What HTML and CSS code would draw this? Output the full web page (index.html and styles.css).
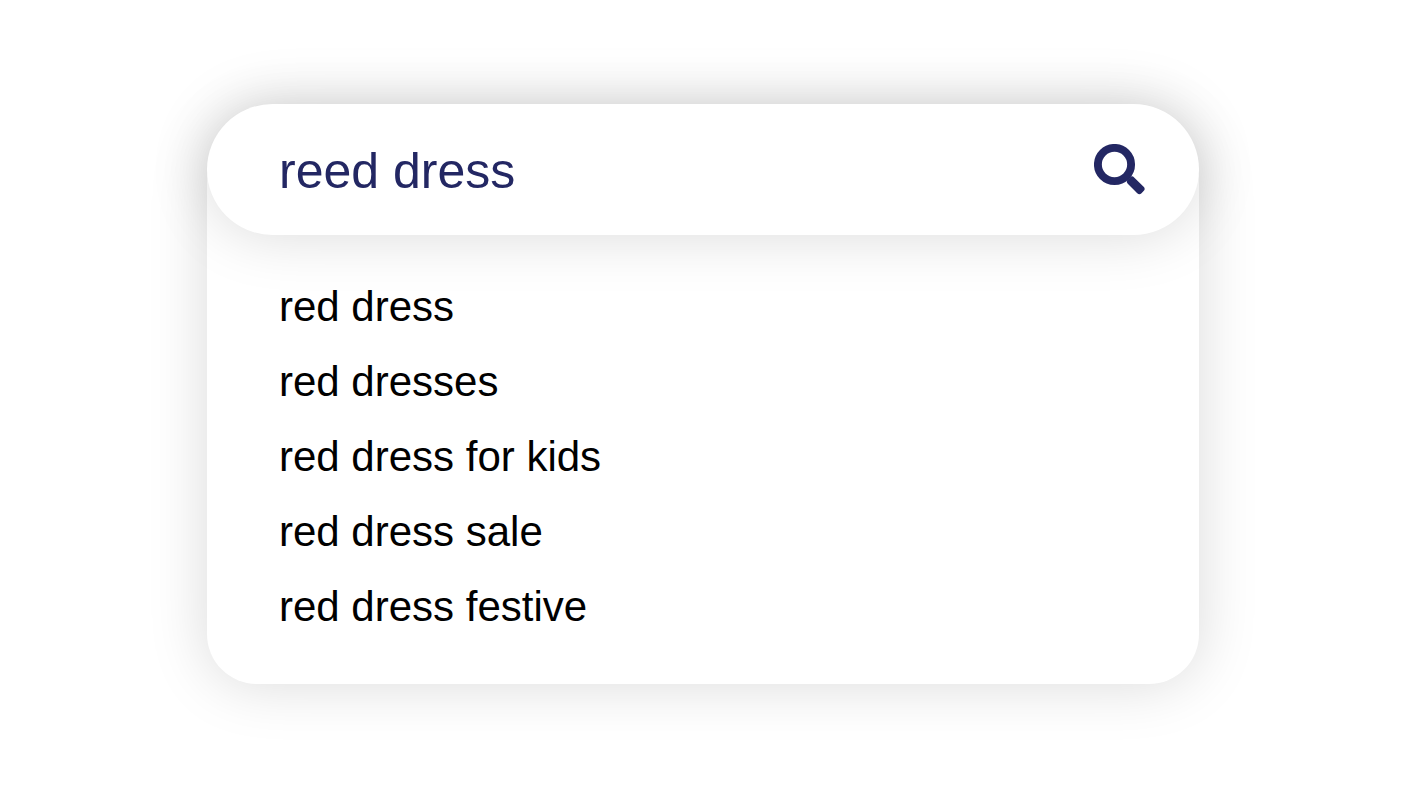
FILE: index.html
```html
<!DOCTYPE html>
<html lang="en">
<head>
  <meta charset="UTF-8">
  <meta name="viewport" content="width=device-width, initial-scale=1.0">
  <title>Search</title>
  <link rel="stylesheet" href="styles.css">
</head>
<body>
  <div class="search-box">
    <form class="search-bar" role="search">
      <input class="search-input" type="text" name="q" value="reed dress" aria-label="Search" autocomplete="off" spellcheck="false">
      <button class="search-btn" type="submit" aria-label="Search">
        <svg class="search-icon" viewBox="0 0 51 51" aria-hidden="true">
          <circle cx="20.5" cy="20.5" r="16.6" fill="none" stroke="currentColor" stroke-width="7.9"/>
          <rect x="32" y="36.8" width="19.4" height="9" rx="3" fill="currentColor" transform="rotate(45 41.7 41.3)"/>
        </svg>
      </button>
    </form>
    <ul class="suggestions">
      <li><a href="#">red dress</a></li>
      <li><a href="#">red dresses</a></li>
      <li><a href="#">red dress for kids</a></li>
      <li><a href="#">red dress sale</a></li>
      <li><a href="#">red dress festive</a></li>
    </ul>
  </div>
</body>
</html>
```
FILE: styles.css
```css
* {
  box-sizing: border-box;
}

body {
  display: flow-root;
  margin: 0;
  padding: 118px 208px 102px 207px;
  background-color: #fff;
  font-family: "Liberation Sans", Arial, sans-serif;
}

/* the bar sticks out a little above the panel */
.search-box {
  display: flow-root;
  border-radius: 65px 65px 50px 50px;
  background-color: #fff;
  box-shadow: 0 0 60px rgba(0, 0, 0, 0.15);
}

.search-bar {
  display: flex;
  align-items: center;
  height: 131px;
  margin-top: -14px;
  padding: 0 54px 0 72px;
  border-radius: 66px;
  background-color: #fff;
  box-shadow: 0 0 60px rgba(0, 0, 0, 0.15);
}

.search-input {
  flex: 1;
  min-width: 0;
  padding: 2px 0 0;
  border: none;
  outline: none;
  background: none;
  color: #232763;
  font-family: inherit;
  font-size: 50px;
}

.search-btn {
  display: flex;
  padding: 0;
  border: none;
  background: none;
  color: #232763;
  cursor: pointer;
}

.search-icon {
  width: 51px;
  height: 51px;
}

.suggestions {
  margin: 0;
  padding: 34px 72px 40px;
  list-style: none;
}

.suggestions a {
  display: block;
  color: #000;
  font-size: 42px;
  line-height: 75px;
  text-decoration: none;
}
```
